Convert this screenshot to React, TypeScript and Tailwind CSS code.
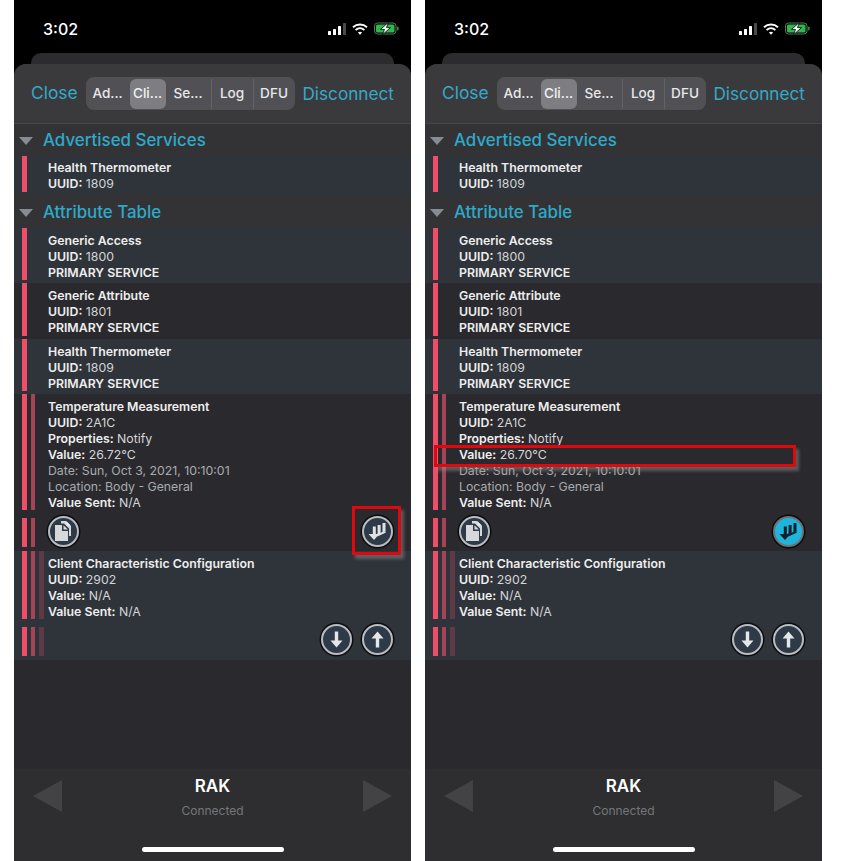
type Line = { label?: string; text?: string; dim?: boolean };

const BAR_COLORS = ["bg-[#ef4e6b]", "bg-[#a34459]", "bg-[#5e3a46]"];

const Bars = ({ depth }: { depth: number }) => {
  return (
    <div className="flex w-[34px] shrink-0 gap-[4px] pl-[8px]">
      {BAR_COLORS.slice(0, depth).map((color) => (
        <div key={color} className={`w-[4.5px] ${color}`} />
      ))}
    </div>
  );
};

const RowText = ({ lines, top = "pt-[5px]" }: { lines: Line[]; top?: string }) => {
  return (
    <div className={`${top} text-[12.3px] leading-[16px] text-[#e2e3e5]`}>
      {lines.map((line, i) =>
        line.dim ? (
          <div key={i} className="text-[#a9abb0]">
            {line.text}
          </div>
        ) : (
          <div key={i}>
            {line.label && <span className="font-semibold text-[#eeeeee]">{line.label}</span>}
            {line.text && <span className="text-[#d4d5d8]"> {line.text}</span>}
          </div>
        ),
      )}
    </div>
  );
};

const SimpleRow = ({
  lines,
  light,
  height,
  top,
}: {
  lines: Line[];
  light: boolean;
  height: string;
  top?: string;
}) => {
  return (
    <div className={`flex pb-[3px] ${height} ${light ? "bg-[#2f343a]" : "bg-[#2a2a2e]"}`}>
      <Bars depth={1} />
      <RowText lines={lines} top={top} />
    </div>
  );
};

const CircleButton = ({ active, children }: { active?: boolean; children: React.ReactNode }) => {
  return (
    <div
      className={`flex h-[31px] w-[31px] items-center justify-center rounded-full border-2 shadow-[0_0_0_1.5px_#0c0c0e] ${
        active ? "border-[#6d7278] bg-[#1fb4dc]" : "border-[#b9bcc0] bg-[#2f3a48]"
      }`}
    >
      {children}
    </div>
  );
};

const CopyIcon = () => (
  <svg width="23" height="23" viewBox="0 0 23 23" fill="#d6d8da">
    <path d="M9 1h5l5 5v10h-2V8.5L12 3.5H9z" />
    <path d="M14.5 1.2v4.3h4.3z" fill="#eceded" />
    <path d="M3 5h7v6h6v10H3z" />
    <path d="M11.5 5.2v4.4h4.4z" />
  </svg>
);

// three stems on one wide arrow head, staggered up to the right
const NotifyIcon = ({ color }: { color: string }) => (
  <svg width="22" height="22" viewBox="0 0 22 22" fill={color}>
    <path d="M15.5 3h3v8l-3 1.5z" />
    <path d="M10.6 5h3v8.5l-3 1.2z" />
    <path d="M5.8 6.5h3v9.5h-3z" />
    <path d="M1.5 14h4.5v-.5h2.6v.8l10-3.3v1.8l-8.8 4-2.8 3.2z" />
  </svg>
);

const ArrowIcon = ({ up }: { up?: boolean }) => (
  <svg width="19" height="19" viewBox="0 0 19 19" fill="#e4e6e8" className={up ? "rotate-180" : ""}>
    <path d="M7.8 1.5h3.4v9h4.3L9.5 17.5l-6-7h4.3z" />
  </svg>
);

const Triangle = () => <div className="h-0 w-0 border-x-[7.5px] border-t-[8px] border-x-transparent border-t-[#878c94]" />;

const SectionHeader = ({ title, height }: { title: string; height: string }) => {
  return (
    <div className={`flex items-center bg-[#333336] pl-[5px] ${height}`}>
      <Triangle />
      <span className="ml-[10px] text-[16.9px] font-medium text-[#2fa9c9]">{title}</span>
    </div>
  );
};

const SignalIcon = () => (
  <svg width="18" height="12" viewBox="0 0 18 12">
    <rect x="0" y="8" width="3" height="4" rx="0.6" fill="#fff" />
    <rect x="5" y="6" width="3" height="6" rx="0.6" fill="#fff" />
    <rect x="10" y="3" width="3" height="9" rx="0.6" fill="#fff" />
    <rect x="15" y="0" width="3" height="12" rx="0.6" fill="#4a4a4c" />
  </svg>
);

const WifiIcon = () => (
  <svg width="16" height="12" viewBox="0 0 16 12" fill="none" stroke="#fff" strokeWidth="1.9">
    <path d="M1 4.2c4-3.6 10-3.6 14 0" />
    <path d="M3.6 7c2.6-2.2 6.2-2.2 8.8 0" />
    <path d="M8 11.8 5.9 9.4c1.2-1 3-1 4.2 0z" fill="#fff" stroke="none" />
  </svg>
);

const BatteryIcon = () => (
  <svg width="25" height="13" viewBox="0 0 25 13">
    <rect x="0.5" y="1" width="21.5" height="11" rx="3" fill="none" stroke="#4f7a52" />
    <rect x="2" y="2.5" width="18.5" height="8" rx="1.6" fill="#2fb84f" />
    <rect x="23" y="4.5" width="1.6" height="4" rx="0.8" fill="#4f7a52" />
    <path d="M14.5 0.3 6.5 7.4h4l-2 5.3 8-7.1h-4z" fill="#fff" stroke="#000" strokeWidth="0.8" />
  </svg>
);

const TABS = [
  { label: "Ad...", width: "w-[44px]" },
  { label: "Cli...", width: "w-[36px]" },
  { label: "Se...", width: "w-[45px]" },
  { label: "Log", width: "w-[42px]" },
  { label: "DFU", width: "w-[42px]" },
];

const Phone = ({
  value,
  activeNotify,
  children,
}: {
  value: string;
  activeNotify?: boolean;
  children?: React.ReactNode;
}) => {
  return (
    <div className="relative flex h-[861px] w-[397px] flex-col bg-black">
      <div className="flex h-[53px] shrink-0 items-start justify-between pl-[29px] pr-[12px] pt-[19px]">
        <span className="text-[16px] leading-[20px] font-medium text-white">3:02</span>
        <div className="flex items-center gap-[6px] pt-[3px]">
          <SignalIcon />
          <WifiIcon />
          <BatteryIcon />
        </div>
      </div>
      <div className="mx-[17px] h-[11px] shrink-0 rounded-t-[10px] bg-[#2c2c2e]" />

      <div className="flex min-h-0 flex-1 flex-col overflow-hidden rounded-t-[12px] bg-[#2a2a2e]">
        <div className="flex h-[60px] shrink-0 items-center justify-between border-b border-[#46464a] bg-[#3a3a3d] px-[17px]">
          <span className="text-[17.4px] text-[#35a9c9]">Close</span>
          <div className="flex h-[33px] w-[209px] items-center rounded-[8px] bg-[#505055]">
            {TABS.map((tab, i) => (
              <div
                key={tab.label}
                className={`flex h-[30px] items-center justify-center text-[13.6px] font-medium ${tab.width} ${
                  i === 1 ? "rounded-[6px] bg-[#7d7d82] text-[#f0f0f0]" : "text-[#e8e8ea]"
                } ${i === 3 || i === 4 ? "border-l border-[#626267]" : ""}`}
              >
                {tab.label}
              </div>
            ))}
          </div>
          <span className="text-[17.2px] text-[#35a9c9]">Disconnect</span>
        </div>

        <SectionHeader title="Advertised Services" height="h-[32px] pt-[1px]" />
        <SimpleRow
          light
          height="h-[39px]"
          top="pt-[4px]"
          lines={[{ label: "Health Thermometer" }, { label: "UUID:", text: "1809" }]}
        />
        <SectionHeader title="Attribute Table" height="h-[33px] pt-[3px]" />
        <SimpleRow
          light
          height="h-[55px]"
          lines={[{ label: "Generic Access" }, { label: "UUID:", text: "1800" }, { label: "PRIMARY SERVICE" }]}
        />
        <SimpleRow
          light={false}
          height="h-[56px]"
          lines={[{ label: "Generic Attribute" }, { label: "UUID:", text: "1801" }, { label: "PRIMARY SERVICE" }]}
        />
        <SimpleRow
          light
          height="h-[55px]"
          lines={[{ label: "Health Thermometer" }, { label: "UUID:", text: "1809" }, { label: "PRIMARY SERVICE" }]}
        />

        <div className="h-[157px] bg-[#2a2a2e]">
          <div className="flex h-[116px]">
            <Bars depth={2} />
            <RowText
              lines={[
                { label: "Temperature Measurement" },
                { label: "UUID:", text: "2A1C" },
                { label: "Properties:", text: "Notify" },
                { label: "Value:", text: value },
                { dim: true, text: "Date: Sun, Oct 3, 2021, 10:10:01" },
                { dim: true, text: "Location: Body - General" },
                { label: "Value Sent:", text: "N/A" },
              ]}
            />
          </div>
          <div className="mt-[8px] flex h-[29px]">
            <Bars depth={2} />
            <div className="flex flex-1 items-center justify-between pb-[3px] pr-[18px]">
              <CircleButton>
                <CopyIcon />
              </CircleButton>
              <CircleButton active={activeNotify}>
                <NotifyIcon color={activeNotify ? "#10202c" : "#e0e2e4"} />
              </CircleButton>
            </div>
          </div>
        </div>

        <div className="h-[109px] bg-[#2f343a]">
          <div className="flex h-[68px]">
            <Bars depth={3} />
            <RowText
              lines={[
                { label: "Client Characteristic Configuration" },
                { label: "UUID:", text: "2902" },
                { label: "Value:", text: "N/A" },
                { label: "Value Sent:", text: "N/A" },
              ]}
            />
          </div>
          <div className="mt-[8px] flex h-[29px]">
            <Bars depth={3} />
            <div className="flex flex-1 items-center justify-end gap-[10px] pb-[5px] pr-[18px]">
              <CircleButton>
                <ArrowIcon />
              </CircleButton>
              <CircleButton>
                <ArrowIcon up />
              </CircleButton>
            </div>
          </div>
        </div>

        <div className="flex-1 bg-[#2a2a2e]" />

        <div className="relative h-[92px] shrink-0 bg-[#2e2e30]">
          <div className="flex items-start justify-between px-[19px] pt-[11px]">
            <div className="h-0 w-0 border-y-[16px] border-r-[29px] border-y-transparent border-r-[#434345]" />
            <div className="flex flex-col items-center">
              <span className="text-[17px] leading-[12px] font-semibold text-white">RAK</span>
              <span className="mt-[12px] text-[12px] leading-[14px] text-[#74767b]">Connected</span>
            </div>
            <div className="h-0 w-0 border-y-[16px] border-l-[29px] border-y-transparent border-l-[#434345]" />
          </div>
          <div className="absolute bottom-[9px] left-[128px] h-[5px] w-[142px] rounded-full bg-white" />
        </div>
      </div>
      {children}
    </div>
  );
};

const App = () => {
  return (
    <div className="flex h-[861px] w-[850px] gap-[14px] overflow-hidden bg-white pl-[14px] font-['Inter','Liberation_Sans',sans-serif]">
      <Phone value="26.72°C">
        <div className="absolute left-[338px] top-[506px] h-[49px] w-[49px] border-[3px] border-[#e0080f] shadow-[3px_4px_3px_rgba(150,150,150,0.45)]" />
      </Phone>
      <Phone value="26.70°C" activeNotify>
        <div className="absolute left-[9px] top-[445px] h-[22px] w-[362px] border-[3px] border-[#e0080f] shadow-[3px_4px_3px_rgba(150,150,150,0.45)]" />
      </Phone>
    </div>
  );
};

export default App;
